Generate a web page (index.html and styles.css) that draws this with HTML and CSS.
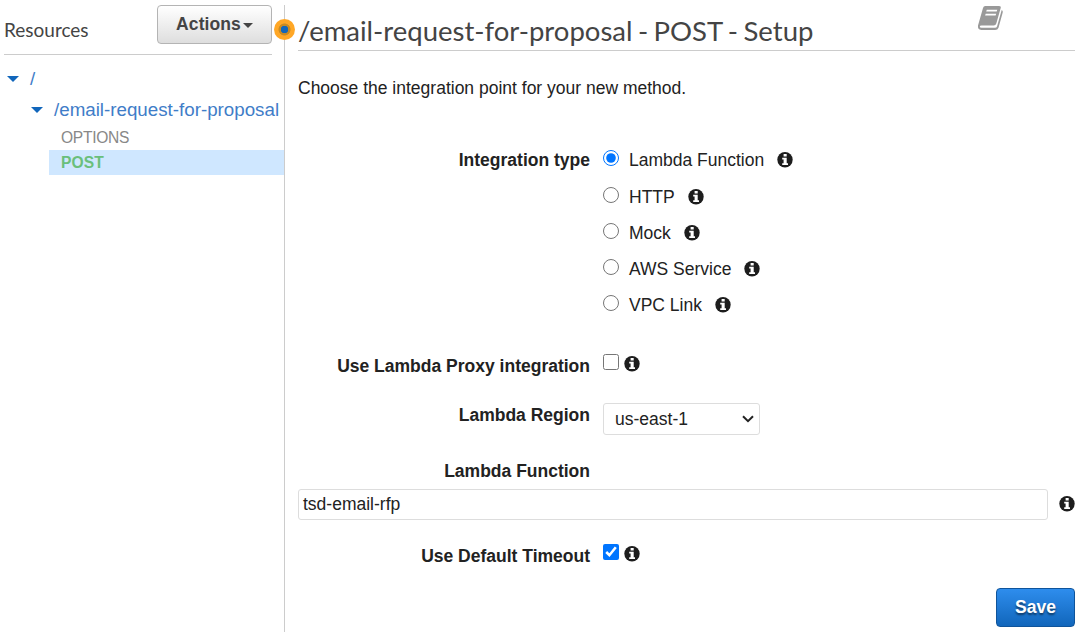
FILE: index.html
```html
<!DOCTYPE html>
<html lang="en">
<head>
<meta charset="utf-8">
<title>Method setup</title>
<link rel="stylesheet" href="styles.css">
</head>
<body>
<svg class="defs" width="0" height="0" aria-hidden="true">
  <symbol id="info" viewBox="0 0 16 16">
    <circle cx="8" cy="7.700" r="7.7" fill="#1d1d1d"/>
    <path fill="#fff" d="M6.600 2h3.100v2.500H6.600zM5.200 5.700h4.500v5.500h1.300v1.900H5.200v-1.900h1.400V7.600H5.200z"/>
  </symbol>
</svg>
<div class="app">
  <aside class="sidebar">
    <header class="side-head">
      <h2 class="side-title">Resources</h2>
      <button class="btn-actions">Actions<i class="caret"></i></button>
    </header>
    <nav class="tree">
      <div class="node root"><i class="arrow"></i><a>/</a></div>
      <div class="node child"><i class="arrow"></i><a>/email-request-for-proposal</a></div>
      <div class="method options">OPTIONS</div>
      <div class="method post">POST</div>
    </nav>
    <span class="marker"></span>
  </aside>
  <main class="main">
    <header class="main-head">
      <h1 class="title">/email-request-for-proposal - POST - Setup</h1>
      <svg class="book" width="28" height="26" viewBox="0 0 28 26">
        <path fill="#999" fill-rule="evenodd" d="M8.200 1H22q2.300 0 1.700 2L19.300 18.600q-.6 1.900-2.600 1.900H4.500q-1.800 0-1.700 1.200.1 1 1.700 1H18q1.600 0 2.100-1.500L24.700 5q1.500.6 1 2.400L21.500 22.800Q20.700 25 18.100 25H4.300Q.4 24.500 1 20.500L6 3Q6.600 1 8.200 1ZM9.800 4.800 9.200 6.600h10.500l.6-1.800ZM8.700 8.800 8.100 10.600h10.500l.6-1.800Z"/>
      </svg>
    </header>
    <p class="intro">Choose the integration point for your new method.</p>
    <form class="form">
      <div class="row types">
        <span class="label">Integration type</span>
        <div class="options-list">
          <label class="opt"><input type="radio" name="t" checked><span>Lambda Function</span><svg class="info"><use href="#info"/></svg></label>
          <label class="opt"><input type="radio" name="t"><span>HTTP</span><svg class="info"><use href="#info"/></svg></label>
          <label class="opt"><input type="radio" name="t"><span>Mock</span><svg class="info"><use href="#info"/></svg></label>
          <label class="opt"><input type="radio" name="t"><span>AWS Service</span><svg class="info"><use href="#info"/></svg></label>
          <label class="opt"><input type="radio" name="t"><span>VPC Link</span><svg class="info"><use href="#info"/></svg></label>
        </div>
      </div>
      <div class="row proxy">
        <span class="label">Use Lambda Proxy integration</span>
        <div class="check"><input type="checkbox"><svg class="info"><use href="#info"/></svg></div>
      </div>
      <div class="row region">
        <span class="label">Lambda Region</span>
        <div class="select"><span>us-east-1</span><svg width="12" height="8" viewBox="0 0 12 8"><path d="M1 1.200 6 6.200 11 1.200" fill="none" stroke="#222" stroke-width="2"/></svg></div>
      </div>
      <div class="row func"><span class="label">Lambda Function</span></div>
      <div class="func-input">
        <div class="field">tsd-email-rfp</div>
        <svg class="info"><use href="#info"/></svg>
      </div>
      <div class="row timeout">
        <span class="label">Use Default Timeout</span>
        <div class="check"><input type="checkbox" checked><svg class="info"><use href="#info"/></svg></div>
      </div>
      <div class="actions"><button type="button" class="btn-save">Save</button></div>
    </form>
  </main>
</div>
</body>
</html>
```
FILE: styles.css
```css
* { box-sizing: border-box; }
body { margin: 0; background: #fff; color: #222; font: 17.5px/24px "Liberation Sans", Arial, sans-serif; overflow: hidden; }
h1, h2, p { margin: 0; font-weight: 400; }
input { margin: 0; width: 16px; height: 16px; flex: none; }
.defs { display: block; width: 0; height: 0; }
.app { display: flex; height: 632px; padding-top: 5px; }
.sidebar { position: relative; flex: none; width: 285px; border-right: 1px solid #ccc; }
.side-head { display: flex; justify-content: space-between; height: 50px; margin: 0 12px 0 4px; border-bottom: 1px solid #ccc; }
.side-title { font: 19px/50px Lato, sans-serif; color: #444; }
.btn-actions { display: flex; align-items: center; justify-content: center; gap: 2px; width: 115px; height: 39px; padding: 0 0 1px; border: 1px solid #b4b4b4; border-radius: 4px; background: linear-gradient(#fff, #dedede); color: #444; font: bold 17.5px "Liberation Sans", Arial, sans-serif; letter-spacing: .1px; }
.caret { margin-top: 3px; border: 5px solid transparent; border-top: 5px solid #444; border-bottom: 0; }
.marker { position: absolute; left: 274px; top: 14px; width: 21px; height: 21px; border-radius: 50%; background: radial-gradient(circle closest-side, #1166bb 0 3.5px, #c98a22 4px 5.6px, #ffa726 6.4px); }
.tree { color: #3f7dc8; font-size: 18.75px; }
.node { display: flex; align-items: center; }
.arrow { border: 6px solid transparent; border-top: 6px solid #1166bb; border-bottom: 0; }
.root { height: 31px; margin-top: 8px; padding-left: 7px; gap: 11px; }
.child { height: 32px; padding-left: 31px; gap: 11px; }
.method { height: 25px; margin-left: 49px; padding-left: 12px; font-size: 15.6px; line-height: 25px; }
.options { margin-top: -1px; color: #888; line-height: 26px; letter-spacing: -.3px; }
.post { background: #cfe7ff; color: #6abf7b; font-weight: 700; letter-spacing: .1px; }
.main { flex: 1; padding: 0 7px 0 13px; }
.main-head { display: flex; justify-content: space-between; height: 46px; border-bottom: 1px solid #ccc; padding-right: 70px; }
.title { font: 27.5px/51px Lato, sans-serif; color: #444; white-space: nowrap; word-spacing: -1.6px; }
.intro { margin-top: 25px; }
.form { margin-top: 48px; }
.row { display: grid; grid-template-columns: 292px 1fr; column-gap: 13px; align-items: start; }
.label { justify-self: end; font-weight: 700; white-space: nowrap; }
.options-list { display: flex; flex-direction: column; }
.opt { display: flex; height: 36px; }
.opt:first-child { height: 37px; }
.opt input { margin: 2px 10px 0 0; }
.info { display: block; flex: none; width: 16px; height: 16px; margin: 4px 0 0 13px; }
.check { display: flex; }
.check .info { margin: 2px 0 0 5px; }
.proxy { margin-top: 25px; }
.region { margin-top: 25px; }
.select { display: flex; align-items: center; justify-content: space-between; width: 157px; height: 32px; padding: 0 5px 0 11px; border: 1px solid #ddd; border-radius: 3px; }
.func { margin-top: 24px; }
.func-input { display: flex; align-items: center; justify-content: space-between; margin-top: 6px; }
.func-input .info { margin: 0 0 2px; }
.field { width: 750px; height: 31px; padding-left: 4px; line-height: 28px; border: 1px solid #ddd; border-radius: 3px; }
.timeout { margin-top: 24px; }
.actions { display: flex; justify-content: flex-end; margin-top: 20px; }
.btn-save { width: 79px; height: 39px; padding: 0 0 1px; border: 1px solid #0f549b; border-radius: 4px; background: linear-gradient(#2e8ded, #1166bb); color: #fff; font: bold 17.5px "Liberation Sans", Arial, sans-serif; text-shadow: 0 2px 2px rgba(0,0,0,.5); }
```
